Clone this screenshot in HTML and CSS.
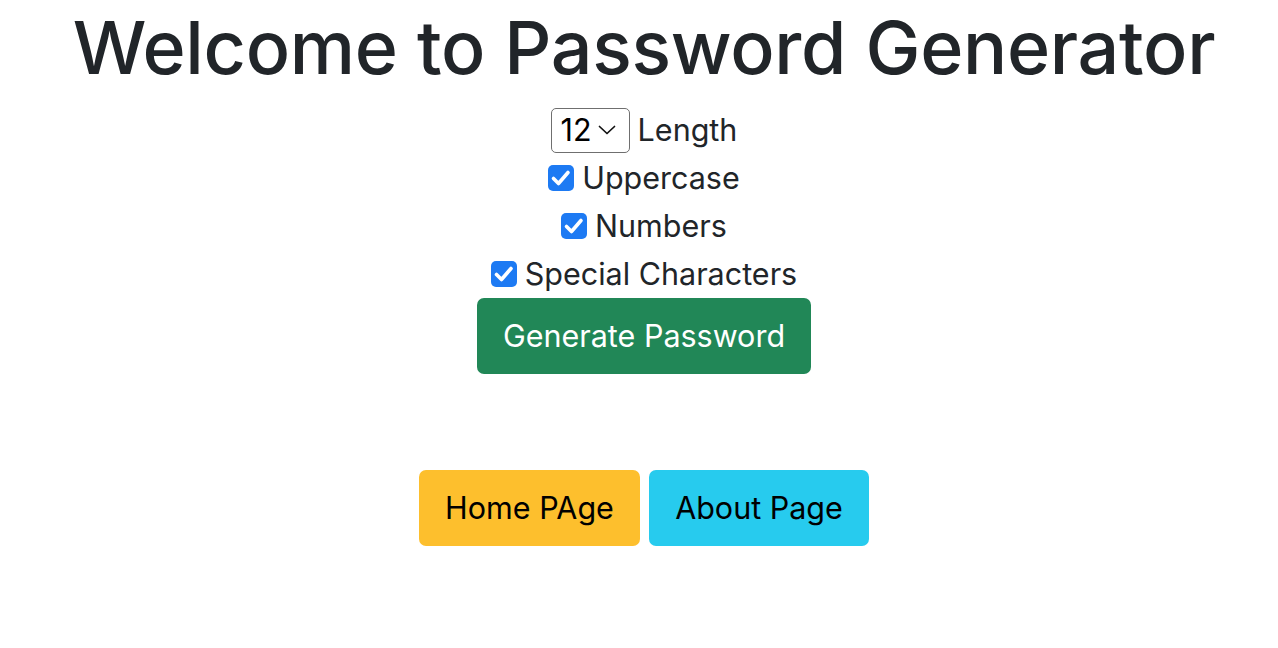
FILE: index.html
```html
<!DOCTYPE html>
<html lang="en">
<head>
<meta charset="utf-8">
<title>Password Generator</title>
<link rel="stylesheet" href="styles.css">
</head>
<body>
<main class="page">
  <h1 class="title">Welcome to Password Generator</h1>
  <form class="options">
    <div class="row">
      <span class="select"><span class="select-value">12</span><svg class="chev" viewBox="0 0 18 10" width="18" height="10"><path d="M1.5 1.5l7.5 7 7.5-7" fill="none" stroke="#111" stroke-width="1.7" stroke-linecap="round" stroke-linejoin="round"/></svg></span>
      <span class="label">Length</span>
    </div>
    <div class="row">
      <span class="check"><svg viewBox="0 0 26 26" width="26" height="26"><path d="M5.5 13.5l5 5 9.5-11" fill="none" stroke="#fff" stroke-width="3.6" stroke-linecap="round" stroke-linejoin="round"/></svg></span>
      <span class="label">Uppercase</span>
    </div>
    <div class="row">
      <span class="check"><svg viewBox="0 0 26 26" width="26" height="26"><path d="M5.5 13.5l5 5 9.5-11" fill="none" stroke="#fff" stroke-width="3.6" stroke-linecap="round" stroke-linejoin="round"/></svg></span>
      <span class="label">Numbers</span>
    </div>
    <div class="row">
      <span class="check"><svg viewBox="0 0 26 26" width="26" height="26"><path d="M5.5 13.5l5 5 9.5-11" fill="none" stroke="#fff" stroke-width="3.6" stroke-linecap="round" stroke-linejoin="round"/></svg></span>
      <span class="label">Special Characters</span>
    </div>
    <button type="button" class="btn btn-success">Generate Password</button>
  </form>
  <nav class="links">
    <a class="btn btn-warning" href="#">Home PAge</a>
    <a class="btn btn-info" href="#">About Page</a>
  </nav>
</main>
</body>
</html>
```
FILE: styles.css
```css
html, body {
  margin: 0;
  padding: 0;
  background: #fff;
}
body {
  font-family: Inter, "Liberation Sans", sans-serif;
  color: #212529;
}
.page {
  display: flex;
  flex-direction: column;
  align-items: center;
  padding-left: 10px;
}
.title {
  margin: 0 0 10px;
  font-size: 73.5px;
  font-weight: 500;
  line-height: 96px;
  letter-spacing: -0.3px;
  color: #212529;
}
.options {
  display: flex;
  flex-direction: column;
  align-items: center;
}
.row {
  display: flex;
  align-items: center;
  gap: 8px;
  height: 48px;
}
.label {
  font-size: 30.5px;
  line-height: 48px;
}
.select {
  display: inline-flex;
  align-items: center;
  gap: 6px;
  box-sizing: border-box;
  width: 79px;
  height: 45px;
  padding: 0 7px 0 9px;
  border: 1.5px solid #6f6f6f;
  border-radius: 5px;
  font-size: 30.5px;
  color: #000;
}
.select-value {
  line-height: 1;
}
.chev {
  display: block;
}
.check {
  display: block;
  width: 26px;
  height: 26px;
  border-radius: 5px;
  background: #1d7af3;
}
.check svg {
  display: block;
}
.btn {
  display: inline-block;
  box-sizing: border-box;
  height: 76px;
  padding: 0 24px;
  border: 0;
  border-radius: 7px;
  font-family: inherit;
  font-size: 30.5px;
  line-height: 76px;
  text-decoration: none;
  cursor: pointer;
}
.btn-success {
  background: #218757;
  color: #fff;
  width: 334px;
}
.links {
  display: flex;
  gap: 9px;
  margin-top: 96px;
}
.btn-warning {
  background: #fdbf2d;
  color: #000;
  width: 221px;
  text-align: center;
}
.btn-info {
  background: #27cbee;
  color: #000;
  width: 220px;
  text-align: center;
}
```
